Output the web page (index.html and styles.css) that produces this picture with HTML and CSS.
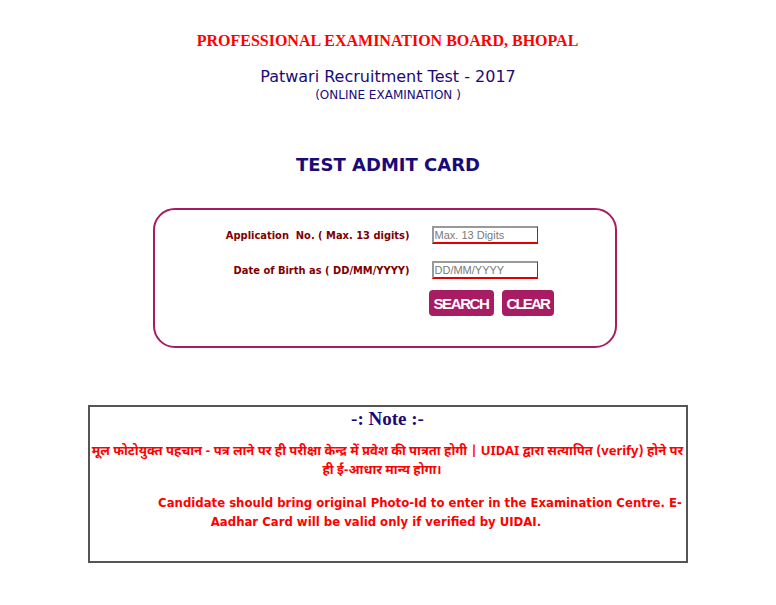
FILE: index.html
```html
<!DOCTYPE html>
<html>
<head>
<meta charset="utf-8">
<link rel="stylesheet" href="styles.css">
</head>
<body>
<div class="page">
  <div class="board">PROFESSIONAL EXAMINATION BOARD, BHOPAL</div>
  <div class="exam">Patwari Recruitment Test - 2017</div>
  <div class="mode">(ONLINE EXAMINATION )</div>
  <div class="card-title">TEST ADMIT CARD</div>

  <div class="form-box">
    <div class="form-grid">
      <label class="lbl">Application&nbsp; No. ( Max. 13 digits)</label>
      <input class="field" type="text" placeholder="Max. 13 Digits">
      <label class="lbl">Date of Birth as ( DD/MM/YYYY)</label>
      <input class="field" type="text" placeholder="DD/MM/YYYY">
      <span></span>
      <div class="buttons">
        <button class="btn">SEARCH</button>
        <button class="btn btn-narrow">CLEAR</button>
      </div>
    </div>
  </div>

  <div class="note">
    <div class="note-title">-: Note :-</div>
    <p class="note-hi">मूल फोटोयुक्त पहचान - पत्र लाने पर ही परीक्षा केन्द्र में प्रवेश की पात्रता होगी | UIDAI द्वारा सत्यापित (verify) होने पर ही ई-आधार मान्य होगा।<span class="tail-hi"></span></p>
    <p class="note-en">Candidate should bring original Photo-Id to enter in the Examination Centre. E-Aadhar Card will be valid only if verified by UIDAI.<span class="tail-en"></span></p>
  </div>
</div>
</body>
</html>
```
FILE: styles.css
```css
html, body {
  margin: 0;
  padding: 0;
  background: #fff;
}
body {
  font-family: "DejaVu Sans", Verdana, sans-serif;
}
.page {
  width: 776px;
  display: flex;
  flex-direction: column;
  align-items: center;
}
.board {
  margin-top: 31px;
  font-family: "Liberation Serif", "Times New Roman", serif;
  font-weight: bold;
  font-size: 16px;
  color: #ff0000;
  line-height: 20px;
  margin-right: 1px;
}
.exam {
  margin-top: 16px;
  font-size: 16px;
  line-height: 20px;
  color: #1a0a78;
}
.mode {
  margin-top: 1px;
  font-size: 12px;
  line-height: 15px;
  color: #1a0a78;
}
.card-title {
  margin-top: 51px;
  font-size: 18px;
  font-weight: bold;
  color: #1a0a78;
  line-height: 21px;
}
.form-box {
  margin-top: 33px;
  width: 460px;
  height: 136px;
  border: 2px solid #a81c62;
  border-radius: 22px;
  margin-right: 7px;
}
.form-grid {
  display: grid;
  grid-template-columns: 255px 110px;
  column-gap: 22px;
  row-gap: 17px;
  justify-content: start;
  padding-top: 16px;
  align-items: center;
}
.lbl {
  text-align: right;
  font-family: "DejaVu Sans Condensed", "DejaVu Sans", sans-serif;
  font-size: 11px;
  font-weight: bold;
  color: #800000;
}
.field {
  width: 106px;
  height: 18px;
  box-sizing: border-box;
  border-top: 2px solid #999;
  border-left: 2px solid #999;
  border-right: 1px solid #e00000;
  border-bottom: 2px solid #e00000;
  padding: 0 1px;
  font-family: "Liberation Sans", Arial, sans-serif;
  font-size: 11px;
  outline: none;
  color: #333;
}
.field::placeholder {
  color: #7a7a7a;
}
.buttons {
  display: flex;
  gap: 8px;
  margin-left: -3px;
  margin-top: -6px;
}
.btn {
  background: #a81c64;
  color: #fff;
  border: none;
  border-radius: 4px;
  font-family: "Liberation Sans", Arial, sans-serif;
  font-weight: bold;
  font-size: 15px;
  letter-spacing: -1.4px;
  height: 26px;
  padding: 0 6px 0 5px;
}
.btn-narrow {
  letter-spacing: -1.8px;
  padding: 0 5px 0 4px;
}
.note {
  margin-top: 57px;
  width: 596px;
  height: 154px;
  border: 2px solid #555;
  text-align: center;
  margin-right: 1px;
}
.note-title {
  font-family: "Liberation Serif", "Times New Roman", serif;
  font-weight: bold;
  font-size: 19px;
  color: #1a0a78;
  line-height: 22px;
  margin-top: 1px;
}
.note-hi {
  margin: 12px 0 0;
  font-family: "Noto Sans Devanagari", "Noto Sans", "DejaVu Sans", sans-serif;
  font-weight: bold;
  font-size: 13px;
  line-height: 19px;
  color: #ff0000;
}
.tail-hi {
  display: inline-block;
  width: 11px;
}
.note-en {
  margin: 13px 0 0;
  text-indent: 65px;
  font-family: "DejaVu Sans Condensed", "DejaVu Sans", sans-serif;
  font-size: 13px;
  font-weight: bold;
  line-height: 19px;
  color: #ff0000;
}
.tail-en {
  display: inline-block;
  width: 23px;
}
```
